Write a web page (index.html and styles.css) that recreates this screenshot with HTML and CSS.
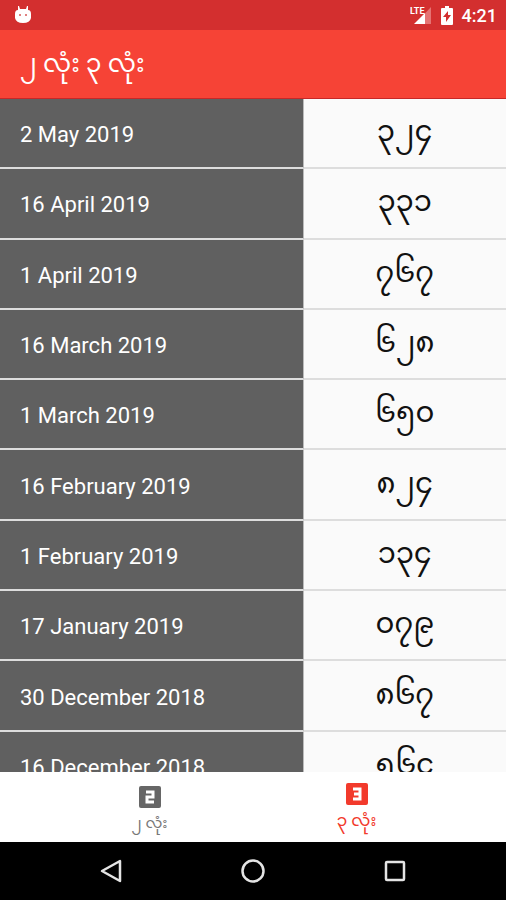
FILE: index.html
```html
<!DOCTYPE html>
<html lang="my">
  <head>
    <meta charset="UTF-8">
    <meta name="viewport" content="width=device-width, initial-scale=1">
    <title>၂ လုံး ၃ လုံး</title>
    <link rel="stylesheet" href="styles.css">
  </head>
  <body>
    <div class="status-bar">
      <svg class="android" width="18" height="20" viewBox="0 0 18 20">
        <path fill="#fff" d="M4 1h1l1 3h6l1-3h1v4q3 0 3 4v4q-1 5-8 5t-8-5V9q0-4 3-4z"/>
        <path fill="#e08080" d="M5 9h2v2H5zM11 9h2v2h-2z"/>
      </svg>
      <div class="status-icons">
        <svg width="22" height="20" viewBox="0 0 22 20">
          <path fill="#e57373" d="M21 2v17H5z"/>
          <path fill="#d32f2f" d="M0 0h14v10H0z"/>
          <path fill="#fff" d="M15 8v11H4z"/>
          <text x="0" y="9" class="lte">LTE</text>
        </svg>
        <svg width="12" height="19" viewBox="0 0 12 19">
          <path fill="#fff" d="M4 0h4v2h3q1 0 1 1v15q0 1-1 1H1q-1 0-1-1V3q0-1 1-1h3z"/>
          <path fill="#d32f2f" d="M7 5v4h3l-5 7v-5H2z"/>
        </svg>
        <span class="clock">4:21</span>
      </div>
    </div>
    <header class="app-bar">
      <h1>၂ လုံး ၃ လုံး</h1>
    </header>
    <main class="results">
      <table>
        <tr><th scope="row">2 May 2019</th><td>၃၂၄</td></tr>
        <tr><th scope="row">16 April 2019</th><td>၃၃၁</td></tr>
        <tr><th scope="row">1 April 2019</th><td>၇၆၇</td></tr>
        <tr><th scope="row">16 March 2019</th><td>၆၂၈</td></tr>
        <tr><th scope="row">1 March 2019</th><td>၆၅၀</td></tr>
        <tr><th scope="row">16 February 2019</th><td>၈၂၄</td></tr>
        <tr><th scope="row">1 February 2019</th><td>၁၃၄</td></tr>
        <tr><th scope="row">17 January 2019</th><td>၀၇၉</td></tr>
        <tr><th scope="row">30 December 2018</th><td>၈၆၇</td></tr>
        <tr><th scope="row">16 December 2018</th><td>၅၆၄</td></tr>
      </table>
    </main>
    <nav class="tabs">
      <a href="#two" class="tab">
        <svg width="22" height="22" viewBox="0 0 22 22">
          <rect width="22" height="22" rx="2" fill="#666"/>
          <path d="M7 6h7v5H8v5h7" fill="none" stroke="#fff" stroke-width="3"/>
        </svg>
        <span>၂ လုံး</span>
      </a>
      <a href="#three" class="tab active">
        <svg width="22" height="22" viewBox="0 0 22 22">
          <rect width="22" height="22" rx="2" fill="#f23a2c"/>
          <path d="M7 6h7v10H7M8 11h6" fill="none" stroke="#fff" stroke-width="3"/>
        </svg>
        <span>၃ လုံး</span>
      </a>
    </nav>
    <div class="nav-bar">
      <button type="button" aria-label="Back">
        <svg width="24" height="26" viewBox="0 0 24 26"><path d="M21 3v20L3 13z"/></svg>
      </button>
      <button type="button" aria-label="Home">
        <svg width="24" height="24" viewBox="0 0 24 24"><circle cx="12" cy="12" r="10.5"/></svg>
      </button>
      <button type="button" aria-label="Recent apps">
        <svg width="24" height="24" viewBox="0 0 24 24"><rect x="3" y="3" width="18" height="18" rx="1"/></svg>
      </button>
    </div>
  </body>
</html>
```
FILE: styles.css
```css
* {
  box-sizing: border-box;
}

body {
  margin: 0;
  height: 100vh;
  display: flex;
  flex-direction: column;
  background-color: #fafafa;
  font-family: Roboto, "Noto Sans Myanmar", Padauk, sans-serif;
}

.status-bar {
  flex: none;
  height: 30px;
  padding: 0 9px 0 14px;
  display: flex;
  align-items: center;
  justify-content: space-between;
  background-color: #d32f2f;
  color: #fff;
}

.status-icons {
  display: flex;
  align-items: center;
  gap: 9px;
}

.lte {
  font-size: 9px;
  font-weight: bold;
  fill: #fff;
}

.clock {
  font-size: 18px;
  font-weight: 500;
}

.app-bar {
  flex: none;
  height: 69px;
  padding: 0 20px;
  display: flex;
  align-items: center;
  background-color: #f64336;
  border-bottom: 1px solid #c62828;
  color: #fff;
}

.app-bar h1 {
  margin: 0;
  font-size: 25px;
  font-weight: normal;
  line-height: 36px;
}

.results {
  flex: 1;
  min-height: 0;
  overflow: hidden;
}

.results table {
  width: 100%;
  height: 703px;
  border-collapse: separate;
  border-spacing: 0;
  table-layout: fixed;
}

.results th,
.results td {
  padding: 0;
  border-bottom: 2px solid #ddd;
  line-height: 36px;
}

.results th {
  width: 60%;
  padding-top: 4px;
  padding-left: 20px;
  border-right: 1px solid #bbb;
  background-color: #606060;
  color: #fff;
  font-size: 22px;
  font-weight: normal;
  text-align: left;
}

.results td {
  padding-bottom: 4px;
  color: #111;
  font-size: 29px;
  text-align: center;
}

.tabs {
  flex: none;
  height: 70px;
  padding: 0 46px;
  display: flex;
  background-color: #fff;
}

.tab {
  flex: 1;
  padding-top: 14px;
  display: flex;
  flex-direction: column;
  align-items: center;
  gap: 4px;
  color: #777;
  font-size: 15px;
  line-height: 22px;
  text-decoration: none;
}

.tab.active {
  padding-top: 11px;
  color: #f23a2c;
  font-size: 17px;
}

.nav-bar {
  flex: none;
  height: 58px;
  padding: 0 40px;
  display: flex;
  background-color: #000;
}

.nav-bar button {
  flex: 1;
  padding: 0;
  display: flex;
  align-items: center;
  justify-content: center;
  border: none;
  background: none;
}

.nav-bar svg {
  fill: none;
  stroke: #e4e4e4;
  stroke-width: 2.5;
  stroke-linejoin: round;
}
```
